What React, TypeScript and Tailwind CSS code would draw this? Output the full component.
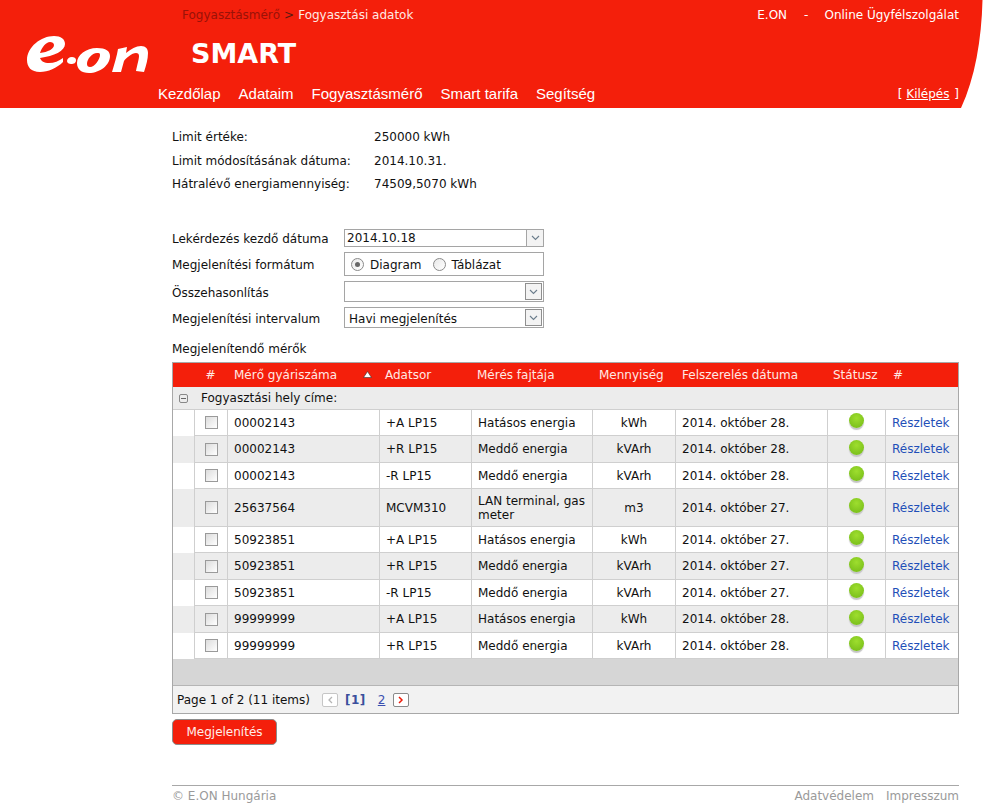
import React from "react";

const rows = [
  ["00002143", "+A LP15", "Hatásos energia", "kWh", "2014. október 28.", "h-[26px]"],
  ["00002143", "+R LP15", "Meddő energia", "kVArh", "2014. október 28.", "h-[27px]"],
  ["00002143", "-R LP15", "Meddő energia", "kVArh", "2014. október 28.", "h-[26px]"],
  ["25637564", "MCVM310", "LAN terminal, gas meter", "m3", "2014. október 27.", "h-[38px]"],
  ["50923851", "+A LP15", "Hatásos energia", "kWh", "2014. október 27.", "h-[26px]"],
  ["50923851", "+R LP15", "Meddő energia", "kVArh", "2014. október 27.", "h-[27px]"],
  ["50923851", "-R LP15", "Meddő energia", "kVArh", "2014. október 27.", "h-[26px]"],
  ["99999999", "+A LP15", "Hatásos energia", "kWh", "2014. október 28.", "h-[27px]"],
  ["99999999", "+R LP15", "Meddő energia", "kVArh", "2014. október 28.", "h-[26px]"],
];

const cols = "grid grid-cols-[21px_33px_152px_92px_121px_83px_152px_58px_73px]";
const cell = "flex items-center border-l border-b border-[#cfcfcf] px-[6px] leading-[14px]";

function Logo() {
  return (
    <svg width="125" height="40" viewBox="25 28 125 40" className="mt-[2px] shrink-0" fill="#fff">
      <path fillRule="evenodd" d="M63 56C57 62 48 66 40 66C31 66 27 61 27 54C27 41 41 30 54 30C61 30 65 33 65 38C65 45 54 50 40 52C41 55 44 57 49 57C54 57 59 55 63 52ZM40 47C48 46 54 43 54 39C54 37 52 36 50 36C46 36 42 41 40 47Z" />
      <path d="M67 55C67 53 69 51 72 51C74 51 76 52 76 54C76 57 74 58 71 58C69 58 67 57 67 55Z" />
      <path fillRule="evenodd" d="M77 57C77 49 86 42 97 42C106 42 110 45 110 50C110 59 100 67 89 67C81 67 77 63 77 57ZM87 58C87 60 88 61 90 61C95 61 100 53 100 49C100 47 99 47 97 47C92 47 87 53 87 58Z" />
      <path d="M112 66C114 59 117 50 118 43L127 41L126 47C131 43 136 40 141 40C146 40 148 43 148 47C148 53 146 60 144 66L136 65C137 60 139 53 139 50C139 48 138 47 136 47C132 47 126 52 124 55L121 66Z" />
    </svg>
  );
}

function Chevron({ flat }: { flat?: boolean }) {
  return (
    <span className={`flex w-[17px] items-center justify-center ${flat ? "border-l border-[#a5a5a5] bg-[#f3f3f3]" : "my-[1px] mr-[1px] border border-[#8f8f8f] bg-[#f3f3f3]"}`}>
      <svg width="9" height="6" viewBox="0 0 9 6" fill="none" stroke="#6b7d8c" strokeWidth="1.1"><path d="M1 1l3.5 3.5L8 1" /></svg>
    </span>
  );
}

function Select({ value, flat, cls }: { value: string; flat?: boolean; cls: string }) {
  return (
    <div className={`flex w-[200px] items-stretch border border-[#a5a5a5] bg-white ${cls}`}>
      <span className={`flex-1 self-center ${flat ? "pl-[2px]" : "pl-[4px] pt-[2px]"}`}>{value}</span>
      <Chevron flat={flat} />
    </div>
  );
}

function Radio({ on }: { on?: boolean }) {
  return (
    <span className="flex h-[13px] w-[13px] items-center justify-center rounded-full border border-[#8a8a8a] bg-gradient-to-br from-[#e8e8e8] to-white">
      {on && <span className="h-[5px] w-[5px] rounded-full bg-[#666]" />}
    </span>
  );
}

function FormRow({ label, cls, children }: { label: string; cls: string; children: React.ReactNode }) {
  return (
    <div className={`flex items-center ${cls}`}>
      <span className="w-[172px] pt-[2px]">{label}</span>
      {children}
    </div>
  );
}

export default function App() {
  return (
    <div className="relative h-[804px] w-[991px] overflow-hidden bg-white font-['DejaVu_Sans',Verdana,sans-serif] text-[12px] leading-[16px] text-[#111]">
      <header className="relative flex h-[108px] w-full flex-col bg-[#f41f0b] text-white">
        <div className="flex h-[30px] items-center pl-[182px] pr-[32px]">
          <span className="text-[#9a1208]">Fogyasztásmérő</span>
          <span className="ml-[4px] text-[#5a1a10]">&gt;</span>
          <span className="ml-[4px] text-[#ffe9e4]">Fogyasztási adatok</span>
          <span className="ml-auto">E.ON</span>
          <span className="ml-[17px]">-</span>
          <span className="ml-[16px]">Online Ügyfélszolgálat</span>
        </div>
        <div className="flex h-[46px] items-center pl-[25px]">
          <Logo />
          <span className="ml-[41px] mt-[2px] text-[27px] font-bold leading-[32px]">SMART</span>
        </div>
        <nav className="flex flex-1 items-start pl-[158px] pr-[32px] pt-[8px] font-['Liberation_Sans',Arial,sans-serif] text-[15px] leading-[20px]">
          <span>Kezdőlap</span>
          <span className="ml-[18px]">Adataim</span>
          <span className="ml-[18px]">Fogyasztásmérő</span>
          <span className="ml-[18px]">Smart tarifa</span>
          <span className="ml-[18px]">Segítség</span>
          <span className="ml-auto mt-[2px] font-['DejaVu_Sans',Verdana,sans-serif] text-[12px] leading-[16px]">
            [ <span className="underline">Kilépés</span> <span className="ml-[1px]">]</span>
          </span>
        </nav>
        <svg className="absolute left-[955px] top-0" width="36" height="108" viewBox="955 0 36 108" fill="#fff">
          <path d="M982.5 0C981.5 40 975 78 961 108H991V0Z" />
        </svg>
      </header>

      <main className="ml-[172px] flex w-[787px] flex-col">
        <div className="mt-[17px] flex flex-col">
          {[
            ["Limit értéke:", "250000 kWh", "h-[24px]"],
            ["Limit módosításának dátuma:", "2014.10.31.", "h-[23px]"],
            ["Hátralévő energiamennyiség:", "74509,5070 kWh", "h-[24px]"],
          ].map(([a, b, h]) => (
            <div key={a} className={`flex items-center ${h}`}>
              <span className="w-[202px]">{a}</span>
              <span>{b}</span>
            </div>
          ))}
        </div>

        <div className="mt-[33px] flex flex-col">
          <FormRow label="Lekérdezés kezdő dátuma" cls="mb-[5px]">
            <Select value="2014.10.18" flat cls="h-[18px]" />
          </FormRow>
          <FormRow label="Megjelenítési formátum" cls="mb-[5px]">
            <div className="flex h-[24px] w-[200px] items-center border border-[#a5a5a5] pl-[6px]">
              <Radio on />
              <span className="ml-[6px] pt-[2px]">Diagram</span>
              <span className="ml-[11px]"><Radio /></span>
              <span className="ml-[6px] pt-[2px]">Táblázat</span>
            </div>
          </FormRow>
          <FormRow label="Összehasonlítás" cls="mb-[5px]">
            <Select value="" cls="h-[21px]" />
          </FormRow>
          <FormRow label="Megjelenítési intervalum" cls="">
            <Select value="Havi megjelenítés" cls="h-[21px]" />
          </FormRow>
        </div>

        <div className="mt-[13px] h-[16px]">Megjelenítendő mérők</div>

        <div className="mt-[5px] flex flex-col border border-[#a8a8a8]">
          <div className={`${cols} h-[24px] items-center bg-[#f41f0b] text-[#ffe9e4]`}>
            <span />
            <span className="text-center">#</span>
            <span className="relative pl-[7px]">
              Mérő gyáriszáma
              <svg className="absolute left-[136px] top-[4px]" width="9" height="7" viewBox="0 0 9 7">
                <path d="M4.5 0.5L8.5 6.5H.5Z" fill="#fff" stroke="#333" strokeWidth=".6" />
              </svg>
            </span>
            <span className="pl-[6px]">Adatsor</span>
            <span className="pl-[6px]">Mérés fajtája</span>
            <span className="pl-[7px]">Mennyiség</span>
            <span className="pl-[7px]">Felszerelés dátuma</span>
            <span className="pl-[6px]">Státusz</span>
            <span className="pl-[8px]">#</span>
          </div>
          <div className="flex h-[23px] items-center border-b border-[#cfcfcf] bg-[#ececec] pl-[6px]">
            <span className="flex h-[9px] w-[9px] items-center justify-center rounded-[2px] border border-[#888]">
              <span className="h-px w-[5px] bg-[#666]" />
            </span>
            <span className="ml-[13px]">Fogyasztási hely címe:</span>
          </div>
          {rows.map((r, i) => (
            <div key={i} className={`${cols} ${r[5]} ${i % 2 ? "bg-[#ececec]" : "bg-white"}`}>
              <span />
              <span className={`${cell} justify-center`}>
                <span className="h-[13px] w-[13px] border border-[#9a9a9a] bg-gradient-to-br from-[#dcdcdc] to-white" />
              </span>
              <span className={cell}>{r[0]}</span>
              <span className={cell}>{r[1]}</span>
              <span className={cell}>{r[2]}</span>
              <span className={`${cell} justify-center`}>{r[3]}</span>
              <span className={cell}>{r[4]}</span>
              <span className={`${cell} justify-center`}>
                <span className="mt-[-4px] h-[15px] w-[15px] rounded-full bg-[radial-gradient(circle_at_50%_35%,#9ede2e,#72b816)] shadow-[0_2px_1px_#c4c4c4]" />
              </span>
              <span className={`${cell} text-[#1f4fb8]`}>Részletek</span>
            </div>
          ))}
          <div className="h-[27px] border-b border-[#b5b5b5] bg-[#d6d6d6]" />
          <div className="flex h-[27px] items-center bg-[#f2f2f2] pl-[4px]">
            <span>Page 1 of 2 (11 items)</span>
            <span className="ml-[12px] flex h-[14px] w-[16px] items-center justify-center rounded-[2px] border border-[#c6c6c6] bg-white">
              <svg width="6" height="8" viewBox="0 0 6 8" fill="none" stroke="#b5b5b5" strokeWidth="1.3"><path d="M5 1L2 4l3 3" /></svg>
            </span>
            <span className="ml-[7px] font-bold tracking-[0.5px] text-[#3a4f9c]">[1]</span>
            <span className="ml-[12px] text-[#3a4fb0] underline">2</span>
            <span className="ml-[8px] flex h-[14px] w-[16px] items-center justify-center rounded-[2px] border border-[#8a8a8a] bg-white">
              <svg width="6" height="8" viewBox="0 0 6 8" fill="none" stroke="#ee1c0a" strokeWidth="1.5"><path d="M1 1l3 3-3 3" /></svg>
            </span>
          </div>
        </div>

        <div className="mt-[5px] flex h-[26px] w-[105px] items-center justify-center rounded-[5px] border border-[#8c8c8c] bg-[#f41f0b] text-[#ffeeea]">
          Megjelenítés
        </div>

        <footer className="mt-[40px] flex h-[19px] items-center justify-between border-t border-[#a8a8a8] pt-[1px] text-[#9a9a9a]">
          <span>© E.ON Hungária</span>
          <span>
            Adatvédelem<span className="ml-[12px]">Impresszum</span>
          </span>
        </footer>
      </main>
    </div>
  );
}
